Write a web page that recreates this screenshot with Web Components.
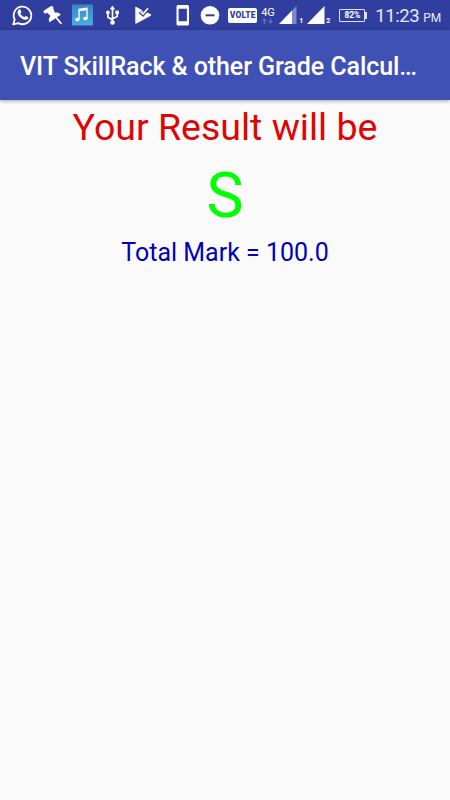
<!DOCTYPE html>
<html lang="en">
<head>
<meta charset="UTF-8">
<title>Grade Calculator</title>
<style>
  body {
    margin: 0;
    height: 800px;
    overflow: hidden;
    background: #fafafa;
    font-family: Roboto, "Liberation Sans", sans-serif;
  }
</style>
</head>
<body>
<status-bar>
  <status-icon slot="left" name="whatsapp"></status-icon>
  <status-icon slot="left" name="pin"></status-icon>
  <status-icon slot="left" name="music"></status-icon>
  <status-icon slot="left" name="usb"></status-icon>
  <status-icon slot="left" name="play"></status-icon>
  <status-icon slot="right" name="phone"></status-icon>
  <status-icon slot="right" name="dnd"></status-icon>
  <volte-badge slot="right">VOLTE</volte-badge>
  <network-type slot="right">4G</network-type>
  <signal-level slot="right" weak>1</signal-level>
  <signal-level slot="right">2</signal-level>
  <battery-level slot="right">82%</battery-level>
  <clock-time slot="right">11:23<span slot="period">PM</span></clock-time>
</status-bar>
<app-header>VIT SkillRack &amp; other Grade Calcul…</app-header>
<grade-result>
  <span slot="heading">Your Result will be</span>
  <span slot="grade">S</span>
  <span slot="total">Total Mark = 100.0</span>
</grade-result>

<script>
  // Small helper: every component attaches an open root with its own markup
  function define(name, html) {
    const template = document.createElement('template');
    template.innerHTML = html;
    customElements.define(name, class extends HTMLElement {
      constructor() {
        super();
        this.attachShadow({ mode: 'open' }).appendChild(template.content.cloneNode(true));
      }
    });
  }

  // Icon drawings: width and shapes, all 30px tall like the bar
  const ICONS = {
    whatsapp: [22, `
      <path d="M1.200 24.500 2.700 19.500A8.800 8.800 0 1 1 6.200 23.100Z" fill="none" stroke="#fff" stroke-width="1.800" stroke-linejoin="round"/>
      <path d="M6.800 9.700c.5-.5 1.300-.5 1.600.1l.9 2.100c.1.4-.8 1.200-.8 1.600.7 1.700 2 2.900 3.700 3.600.5.1 1.200-1.300 1.600-1.200l2.200 1.100c.5.3.2 1.400-.3 2-1.300 1.200-3 1-5.200-.1-2.300-1.200-4.400-3.500-4.900-5.700-.3-1.500.3-2.800 1.200-3.500Z" fill="#fff"/>`],
    pin: [20, `
      <path d="M2.300 11.700 8.600 7.700" stroke="#fff" stroke-width="3.400" stroke-linecap="round"/>
      <path d="M3.500 12 10 8 12 12.800Q16 12 17.800 14.800L6.500 22.300Q4.800 19 7.500 16Z" fill="#fff"/>
      <path d="M13.500 18 17.900 23.300" stroke="#fff" stroke-width="1.800" stroke-linecap="round"/>`],
    music: [21, `
      <defs><linearGradient id="m" x1="0" y1="0" x2="0" y2="1"><stop offset="0" stop-color="#3a86c4"/><stop offset="1" stop-color="#45aee2"/></linearGradient></defs>
      <rect y="4.500" width="21" height="21" rx="1" fill="url(#m)"/>
      <path d="M7 19V9.300L15 8.300V18" fill="none" stroke="#fff" stroke-width="1.300"/>
      <path d="M7 10.300 15 9.300" stroke="#fff" stroke-width="2"/>
      <ellipse cx="5.400" cy="19.600" rx="2.200" ry="1.800" fill="#fff"/>
      <ellipse cx="13.400" cy="18.600" rx="2.200" ry="1.800" fill="#fff"/>`],
    usb: [13, `
      <path d="M6.500 8V22M6.500 19.800 1.900 17.300V13M6.500 18.800 11.200 16.500V12" fill="none" stroke="#fff" stroke-width="1.700"/>
      <path d="M6.500 5.500 9.200 9.500H3.800Z" fill="#fff"/>
      <circle cx="1.900" cy="12.400" r="1.900" fill="#fff"/>
      <rect x="9.400" y="10.600" width="3.500" height="3.500" fill="#fff"/>
      <circle cx="6.500" cy="22.500" r="2.300" fill="#fff"/>`],
    play: [17, `
      <path d="M.3 7.600Q.3 6.500 1.400 7L6 9.600 8.300 12 10.500 11.800 15.800 14.300Q16.800 15 15.800 15.700L1.400 23.500Q.3 24 .3 22.800Z" fill="#fff"/>
      <path d="M4.800 11.800 8 14.900 13 9" fill="none" stroke="#303f9f" stroke-width="3"/>
      <path d="M5.300 11.500 8 14 13 8.200" fill="none" stroke="#fff" stroke-width="1.700"/>`],
    phone: [14, `
      <path fill-rule="evenodd" d="M2 5H11.500Q13 5 13 6.500V24Q13 25.500 11.500 25.500H2Q.5 25.500 .5 24V6.500Q.5 5 2 5ZM2.600 8.700V21.300H10.900V8.700Z" fill="#fff"/>`],
    dnd: [20, `
      <circle cx="10" cy="15.300" r="9.300" fill="#fff"/>
      <rect x="5.500" y="14.300" width="9" height="2" fill="#303f9f"/>`]
  };

  class StatusIcon extends HTMLElement {
    constructor() {
      super();
      this.attachShadow({ mode: 'open' });
    }

    connectedCallback() {
      const [width, shapes] = ICONS[this.getAttribute('name')];
      this.shadowRoot.innerHTML = `
        <style>
          :host { display: block; flex: none; }
          svg { display: block; }
        </style>
        <svg width="${width}" height="30" viewBox="0 0 ${width} 30">${shapes}</svg>
      `;
    }
  }
  customElements.define('status-icon', StatusIcon);

  define('status-bar', `
    <style>
      :host {
        display: flex;
        justify-content: space-between;
        box-sizing: border-box;
        height: 30px;
        padding: 0 9px 0 12px;
        background: #303f9f;
        color: #fff;
      }
      .group { display: flex; }
      .left { gap: 10px; }
      .left ::slotted([name="usb"]) { margin-left: 3px; }
      .left ::slotted([name="play"]) { margin-left: 6px; }
      .left ::slotted([name="music"]) { margin-left: -1px; }
      .left ::slotted([name="pin"]) { margin-left: -1px; }
      .right ::slotted([name="dnd"]) { margin-left: 10px; }
    </style>
    <div class="group left"><slot name="left"></slot></div>
    <div class="group right"><slot name="right"></slot></div>
  `);

  define('volte-badge', `
    <style>
      :host { display: flex; align-items: center; margin-left: 8px; width: 29px; }
      span {
        width: 29px;
        height: 15px;
        border-radius: 2px;
        background: #fff;
        color: #303f9f;
        font: 900 8.5px/15.5px Roboto, sans-serif;
        letter-spacing: 0.1px;
        text-align: center;
      }
    </style>
    <span><slot></slot></span>
  `);

  define('network-type', `
    <style>
      :host {
        display: block;
        width: 14px;
        margin-left: 4px;
        padding-top: 7px;
        box-sizing: border-box;
        font-size: 11px;
        line-height: 11px;
        letter-spacing: -0.3px;
      }
      svg { display: block; }
    </style>
    <slot></slot>
    <svg width="13" height="7" viewBox="0 0 13 7" fill="#5f6bbd">
      <path d="M3.500 0 6 3H4.300V6H2.700V3H1ZM9.500 6 7 3H8.700V0H10.300V3H12Z"/>
    </svg>
  `);

  define('signal-level', `
    <style>
      :host { display: flex; width: 23px; margin-left: 4px; }
      :host(:not([weak])) { margin-left: 5px; }
      svg { flex: none; }
      .bar, .dim { fill: none; }
      :host([weak]) .full { fill: none; }
      :host([weak]) .bar { fill: #7d87cf; }
      :host([weak]) .dim { fill: #fff; }
      .sim { font: 700 7px/43px Roboto, sans-serif; margin-left: 1px; }
      :host([weak]) .sim { margin-left: 2px; }
    </style>
    <svg width="18" height="30" viewBox="0 0 18 30">
      <path class="full" fill="#fff" d="M0 24 17.500 6V24Z"/>
      <path class="bar" d="M13 10.600 17.500 6V24H13Z"/>
      <path class="dim" d="M0 24 13 10.600V24Z"/>
    </svg>
    <span class="sim"><slot></slot></span>
  `);

  define('battery-level', `
    <style>
      :host { display: flex; align-items: center; margin-left: 9px; }
      .case {
        box-sizing: border-box;
        width: 26px;
        height: 13px;
        border: 1px solid #dfe2f5;
        border-radius: 1px;
        font: 700 8.5px/11px Roboto, sans-serif;
        letter-spacing: -0.2px;
        text-align: center;
      }
      .cap { width: 2px; height: 7px; background: #dfe2f5; }
    </style>
    <div class="case"><slot></slot></div>
    <div class="cap"></div>
  `);

  define('clock-time', `
    <style>
      :host {
        display: flex;
        align-items: baseline;
        margin-left: 8px;
        font-size: 18.5px;
        line-height: 32px;
        letter-spacing: -0.4px;
        color: #e6e9f8;
      }
      .period { margin-left: 4px; font-size: 12px; letter-spacing: -0.2px; }
    </style>
    <span><slot></slot></span><span class="period"><slot name="period"></slot></span>
  `);

  define('app-header', `
    <style>
      :host {
        display: block;
        box-sizing: border-box;
        height: 70px;
        padding: 2px 20px 0;
        background: #3f51b5;
        box-shadow: 0 1px 4px rgba(0, 0, 0, 0.35);
        color: #fff;
        font-size: 25px;
        font-weight: 500;
        line-height: 70px;
        letter-spacing: -0.07px;
        white-space: nowrap;
      }
    </style>
    <slot></slot>
  `);

  define('grade-result', `
    <style>
      :host { display: block; text-align: center; }
      .heading { font-size: 37.5px; line-height: 55px; color: #e00505; }
      .grade { font-size: 62.5px; line-height: 82px; color: #00ff00; }
      .total { font-size: 25px; line-height: 31px; color: #0000b8; }
    </style>
    <div class="heading"><slot name="heading"></slot></div>
    <div class="grade"><slot name="grade"></slot></div>
    <div class="total"><slot name="total"></slot></div>
  `);
</script>
</body>
</html>
